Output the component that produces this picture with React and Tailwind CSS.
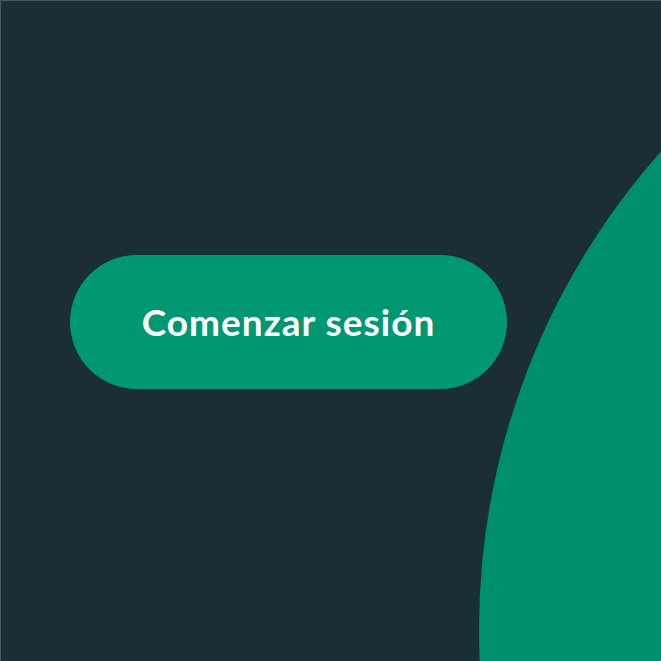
import React from 'react';

const App = () => {
    return (
        <div className="relative w-[661px] h-[661px] overflow-hidden bg-[#1b2e36] border-t border-l border-[#47575e]">
            {/* Decorative shape */}
            <div className="absolute left-[478px] top-[-91px] w-[1440px] h-[1440px] rounded-full bg-[#008f6e]"></div>

            <div className="relative z-10 pl-[69px] pt-[254px]">
                <button
                    className="w-[437px] h-[134px] rounded-full bg-[#009873] text-white text-[37px] tracking-[1px] font-bold flex items-center justify-center"
                    style={{ fontFamily: 'Lato, "Open Sans", sans-serif' }}
                >
                    Comenzar sesión
                </button>
            </div>
        </div>
    );
};

export default App;
